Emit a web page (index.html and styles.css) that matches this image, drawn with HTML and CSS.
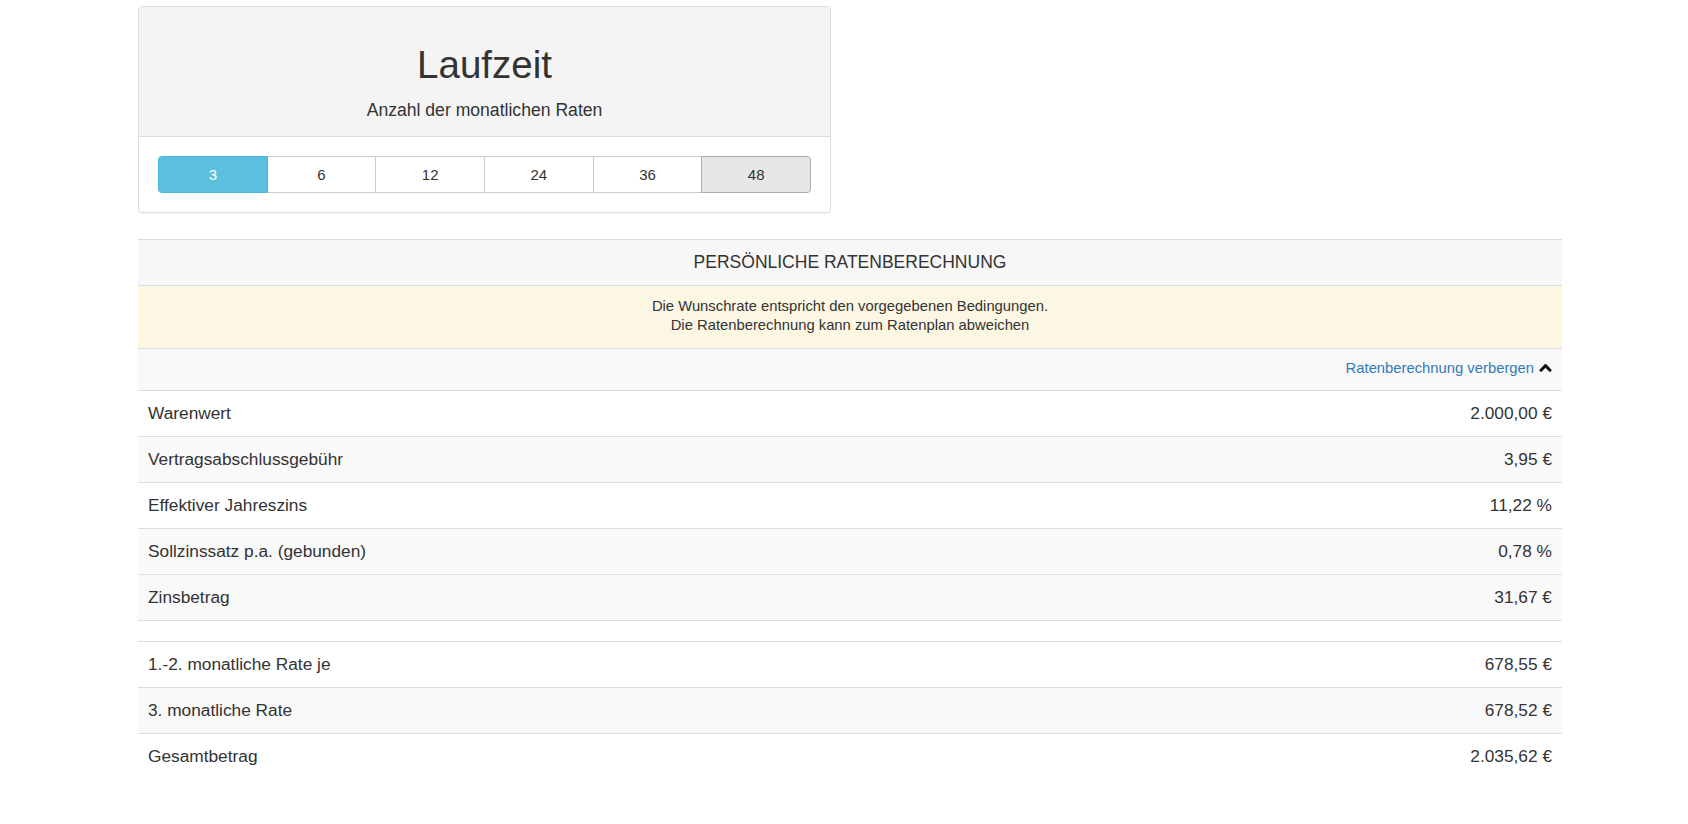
FILE: index.html
```html
<!DOCTYPE html>
<html lang="de">
<head>
<meta charset="utf-8">
<title>Laufzeit</title>
<link rel="stylesheet" href="styles.css">
</head>
<body>
<div class="page">
  <section class="panel">
    <div class="panel-heading">
      <h1 class="panel-title">Laufzeit</h1>
      <p class="panel-sub">Anzahl der monatlichen Raten</p>
    </div>
    <div class="panel-body">
      <div class="btn-group">
        <button class="btn btn-active">3</button>
        <button class="btn">6</button>
        <button class="btn">12</button>
        <button class="btn">24</button>
        <button class="btn">36</button>
        <button class="btn btn-hover">48</button>
      </div>
    </div>
  </section>

  <section class="calc">
    <div class="calc-title">PERSÖNLICHE RATENBERECHNUNG</div>
    <div class="calc-note">Die Wunschrate entspricht den vorgegebenen Bedingungen.<br>Die Ratenberechnung kann zum Ratenplan abweichen</div>
    <div class="calc-toggle">
      <a class="toggle-link" href="#">Ratenberechnung verbergen</a>
      <svg class="chevron" width="13" height="9" viewBox="0 0 13 9"><polyline points="2,7.2 6.5,2.6 11,7.2" fill="none" stroke="#111" stroke-width="3" stroke-linecap="round" stroke-linejoin="round"/></svg>
    </div>
    <div class="calc-row"><span>Warenwert</span><span>2.000,00 €</span></div>
    <div class="calc-row striped"><span>Vertragsabschlussgebühr</span><span>3,95 €</span></div>
    <div class="calc-row"><span>Effektiver Jahreszins</span><span>11,22 %</span></div>
    <div class="calc-row striped"><span>Sollzinssatz p.a. (gebunden)</span><span>0,78 %</span></div>
    <div class="calc-row striped"><span>Zinsbetrag</span><span>31,67 €</span></div>
    <div class="calc-spacer"></div>
    <div class="calc-row"><span>1.-2. monatliche Rate je</span><span>678,55 €</span></div>
    <div class="calc-row striped"><span>3. monatliche Rate</span><span>678,52 €</span></div>
    <div class="calc-row last"><span>Gesamtbetrag</span><span>2.035,62 €</span></div>
  </section>
</div>
</body>
</html>
```

FILE: styles.css
```css
* { box-sizing: border-box; }

html, body {
  margin: 0;
  padding: 0;
  background: #fff;
}

body {
  font-family: "Liberation Sans", Arial, Helvetica, sans-serif;
  color: #333;
  font-size: 15px;
}

.page {
  padding: 6px 0 40px 138px;
  width: 1562px;
}

/* Panel */
.panel {
  width: 693px;
  border: 1px solid #ddd;
  border-radius: 4px;
  background: #fff;
  box-shadow: 0 1px 1px rgba(0,0,0,0.04);
}

.panel-heading {
  background: #f4f4f4;
  border-bottom: 1px solid #ddd;
  border-radius: 3px 3px 0 0;
  padding: 37px 15px 14px;
  text-align: center;
}

.panel-title {
  margin: 0;
  font-size: 38.5px;
  line-height: 42px;
  font-weight: 400;
  color: #333;
}

.panel-sub {
  margin: 12px 0 0;
  font-size: 17.6px;
  line-height: 24px;
}

.panel-body {
  padding: 19px 19px 19px;
}

.btn-group {
  display: flex;
}

.btn {
  flex: 1 1 0;
  height: 37px;
  margin: 0;
  padding: 0 12px;
  font-family: inherit;
  font-size: 15px;
  line-height: 35px;
  color: #333;
  background: #fff;
  border: 1px solid #ccc;
  border-radius: 0;
  text-align: center;
}

.btn + .btn {
  margin-left: -1px;
}

.btn:first-child {
  border-radius: 4px 0 0 4px;
}

.btn:last-child {
  border-radius: 0 4px 4px 0;
}

.btn-active {
  background: #5bc0de;
  border-color: #46b8da;
  color: #fff;
  position: relative;
  z-index: 1;
}

.btn-hover {
  background: #e6e6e6;
  border-color: #adadad;
  position: relative;
  z-index: 1;
}

/* Calculation table */
.calc {
  margin-top: 26px;
  width: 1424px;
  border-top: 1px solid #ddd;
}

.calc-title {
  background: #f7f7f7;
  text-align: center;
  font-size: 17.5px;
  line-height: 24px;
  padding: 10px 10px 11px;
  border-bottom: 1px solid #ddd;
}

.calc-note {
  background: #fcf7e3;
  text-align: center;
  font-size: 14.8px;
  line-height: 19px;
  padding: 11px 10px 13px;
  border-bottom: 1px solid #ddd;
}

.calc-toggle {
  background: #f8f8f8;
  display: flex;
  justify-content: flex-end;
  align-items: center;
  gap: 5px;
  padding: 9px 10px 12px;
  border-bottom: 1px solid #ddd;
  height: 42px;
}

.toggle-link {
  color: #337ab7;
  text-decoration: none;
  font-size: 14.8px;
  line-height: 20px;
}

.chevron {
  display: block;
  margin-top: -1px;
}

.calc-row {
  display: flex;
  justify-content: space-between;
  font-size: 17.3px;
  line-height: 24px;
  padding: 10px 10px 11px;
  border-bottom: 1px solid #ddd;
  background: #fff;
}

.calc-row.striped {
  background: #f9f9f9;
}

.calc-row.last {
  border-bottom: none;
}

.calc-spacer {
  height: 21px;
  border-bottom: 1px solid #ddd;
}
```
